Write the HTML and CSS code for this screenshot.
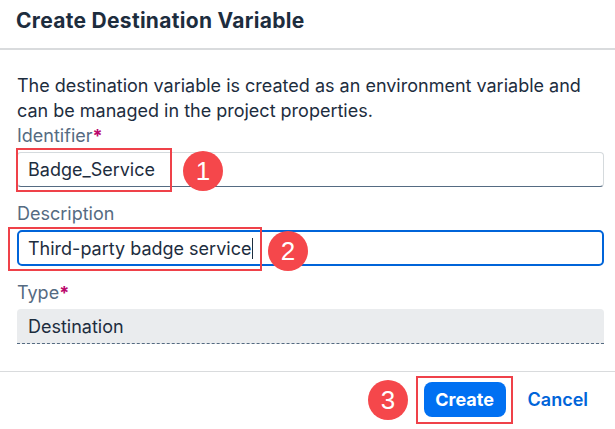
FILE: index.html
```html
<!DOCTYPE html>
<html>
<head>
<meta charset="utf-8">
<link rel="stylesheet" href="styles.css">
</head>
<body>
<div class="dialog">
  <header class="dlg-header">
    <h1 class="dlg-title">Create Destination Variable</h1>
  </header>
  <main class="dlg-content">
    <p class="intro">The destination variable is created as an environment variable and can be managed in the project properties.</p>
    <div class="field">
      <label class="label">Identifier<span class="req">*</span></label>
      <div class="input">Badge_Service</div>
    </div>
    <div class="field">
      <label class="label">Description</label>
      <div class="input focused">Third-party badge service<span class="caret"></span></div>
    </div>
    <div class="field">
      <label class="label">Type<span class="req">*</span></label>
      <div class="input readonly">Destination</div>
    </div>
  </main>
  <footer class="dlg-footer">
    <button class="btn btn-primary">Create</button>
    <button class="btn btn-ghost">Cancel</button>
  </footer>

  <div class="mark box-1"></div>
  <div class="mark box-2"></div>
  <div class="mark box-3"></div>
  <div class="badge badge-1">1</div>
  <div class="badge badge-2">2</div>
  <div class="badge badge-3">3</div>
</div>
</body>
</html>
```
FILE: styles.css
```css
* { box-sizing: border-box; }
html, body { margin: 0; padding: 0; background: #fff; }
body {
  font-family: Inter, Roboto, "Liberation Sans", sans-serif;
  color: #1d2d3e;
  width: 615px;
  height: 429px;
  overflow: hidden;
}
.dialog { position: relative; width: 615px; height: 429px; }

.dlg-header {
  height: 50px;
  padding: 0 16px;
  border-bottom: 2px solid #d9dbdd;
  display: flex;
  align-items: flex-start;
}
.dlg-title {
  margin: 0;
  padding-top: 8px;
  font-size: 21px;
  line-height: 25px;
  letter-spacing: 0.3px;
  font-weight: 700;
  color: #1d2d3e;
}

.dlg-content {
  padding: 23px 11px 0 17px;
  height: 322px;
  border-bottom: 1px solid #d9dbdd;
}
.intro {
  margin: 0;
  font-size: 18px;
  line-height: 25px;
}
.field { margin-bottom: 14px; }
.label {
  display: block;
  font-size: 18px;
  line-height: 25px;
  color: #556b82;
  margin-bottom: 4px;
}
.req { color: #ba066c; font-weight: 700; }
.input {
  height: 35px;
  border: 1px solid #d5dadd;
  border-bottom-color: #556b82;
  border-radius: 4px;
  padding: 0 10px;
  display: flex;
  align-items: center;
  font-size: 18px;
  color: #1d2d3e;
  background: #fff;
}
.input.focused {
  height: 36px;
  border: 2px solid #0064d9;
  border-radius: 5px;
  padding: 0 9px;
}
.caret {
  display: inline-block;
  width: 1px;
  height: 21px;
  background: #1d2d3e;
  margin-left: 1px;
}
.input.readonly {
  background: #eaecee;
  border: none;
  border-bottom: 1px dashed #556b82;
  border-radius: 4px 4px 0 0;
  padding: 0 11px;
}

.dlg-footer {
  display: flex;
  justify-content: flex-end;
  align-items: center;
  gap: 10px;
  padding: 10px 15px 0 0;
}
.btn {
  height: 35px;
  font-family: Inter, Roboto, "Liberation Sans", sans-serif;
  font-size: 18px;
  font-weight: 700;
  border: none;
  border-radius: 8px;
  cursor: pointer;
}
.btn-primary {
  width: 82px;
  padding: 0;
  background: #0070f2;
  color: #fff;
}
.btn-ghost {
  background: transparent;
  color: #0064d9;
  padding: 0 12px;
  font-weight: 600;
}

.mark {
  position: absolute;
  border: 2px solid #ef4149;
}
.box-1 { left: 16px; top: 148px; width: 156px; height: 44px; }
.box-2 { left: 8px; top: 227px; width: 254px; height: 44px; }
.box-3 { left: 416px; top: 376px; width: 97px; height: 48px; }

.badge {
  position: absolute;
  width: 40px;
  height: 40px;
  border-radius: 50%;
  background: #f5474b;
  color: #fff;
  font-family: "Liberation Sans", Arial, sans-serif;
  font-size: 26px;
  line-height: 40px;
  text-align: center;
}
.badge-1 { left: 183px; top: 151px; }
.badge-2 { left: 268px; top: 231px; }
.badge-3 { left: 368px; top: 380px; }
```
